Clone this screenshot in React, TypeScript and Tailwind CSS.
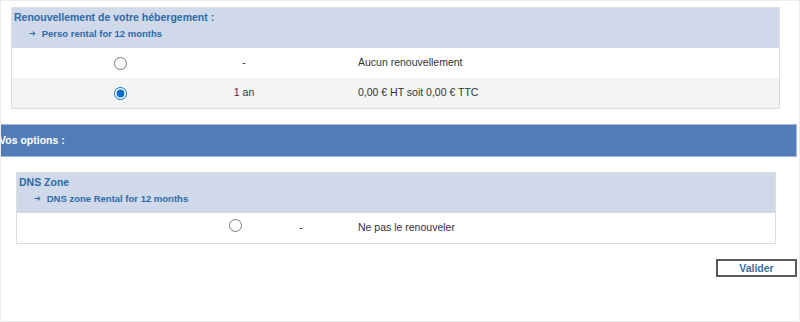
import React from "react";

type Row = { checked?: boolean; period: string; label: string; alt?: boolean };

function Radio({ checked }: { checked?: boolean }) {
  return (
    <input
      type="radio"
      defaultChecked={checked}
      className="m-0 h-[13px] w-[13px] accent-[#0a6ed1]"
    />
  );
}

function SectionHeader({ title, sub }: { title: string; sub: string }) {
  return (
    <div className="bg-[#cfd9ea] pl-[2px] pt-px pb-[7px]">
      <p className="text-[10.5px] font-bold leading-[16px] text-[#2d6aa6]">{title}</p>
      <p className="mt-[2px] flex items-center pl-[15px] text-[9.5px] font-bold leading-[14px] text-[#2d6aa6]">
        <span className="mr-[6px] text-[8px]" style={{ fontFamily: '"DejaVu Sans", sans-serif' }}>
          ➔
        </span>
        {sub}
      </p>
    </div>
  );
}

export default function App() {
  const renewals: Row[] = [
    { period: "-", label: "Aucun renouvellement" },
    { checked: true, period: "1 an", label: "0,00 € HT soit 0,00 € TTC", alt: true },
  ];

  return (
    <div
      className="h-[322px] w-[800px] overflow-hidden border border-[#ececec] bg-white text-[10.5px] text-[#333]"
      style={{ fontFamily: '"Liberation Sans", Arial, sans-serif' }}
    >
      {/* ── Renouvellement ─────────────────────────────────────────── */}
      <div className="ml-[10px] mr-[19px] mt-[6px] border border-[#dddddd]">
        <SectionHeader title="Renouvellement de votre hébergement :" sub="Perso rental for 12 months" />
        {renewals.map((r, i) => (
          <div
            key={i}
            className={`grid h-[30px] grid-cols-[216px_32px_1fr] items-center ${r.alt ? "bg-[#f4f4f4]" : "bg-white"}`}
          >
            <div className="flex justify-center">
              <Radio checked={r.checked} />
            </div>
            <div className="text-center">{r.period}</div>
            <div className="pl-[98px]">{r.label}</div>
          </div>
        ))}
      </div>

      {/* ── Vos options ────────────────────────────────────────────── */}
      <div className="-ml-px mr-[2px] mt-[15px] flex h-[33px] items-center border border-[#a3b8d6] bg-[#537db8] indent-[-2px] text-[10.5px] font-bold text-white">
        Vos options :
      </div>

      {/* ── DNS Zone ───────────────────────────────────────────────── */}
      <div className="ml-[15px] mr-[23px] mt-[15px] border border-[#dddddd]">
        <SectionHeader title="DNS Zone" sub="DNS zone Rental for 12 months" />
        <div className="flex h-[30px] items-center bg-white">
          <div className="w-[240px] pl-[212px]">
            <Radio />
          </div>
          <div className="w-[88px] text-center">-</div>
          <div className="pl-[13px]">Ne pas le renouveler</div>
        </div>
      </div>

      <div className="mr-[2px] mt-[15px] flex justify-end">
        <button className="h-[18px] w-[81px] border-2 border-[#5a5a5a] bg-white text-[10.5px] font-bold leading-[14px] text-[#3a6ea5]">
          Valider
        </button>
      </div>
    </div>
  );
}
